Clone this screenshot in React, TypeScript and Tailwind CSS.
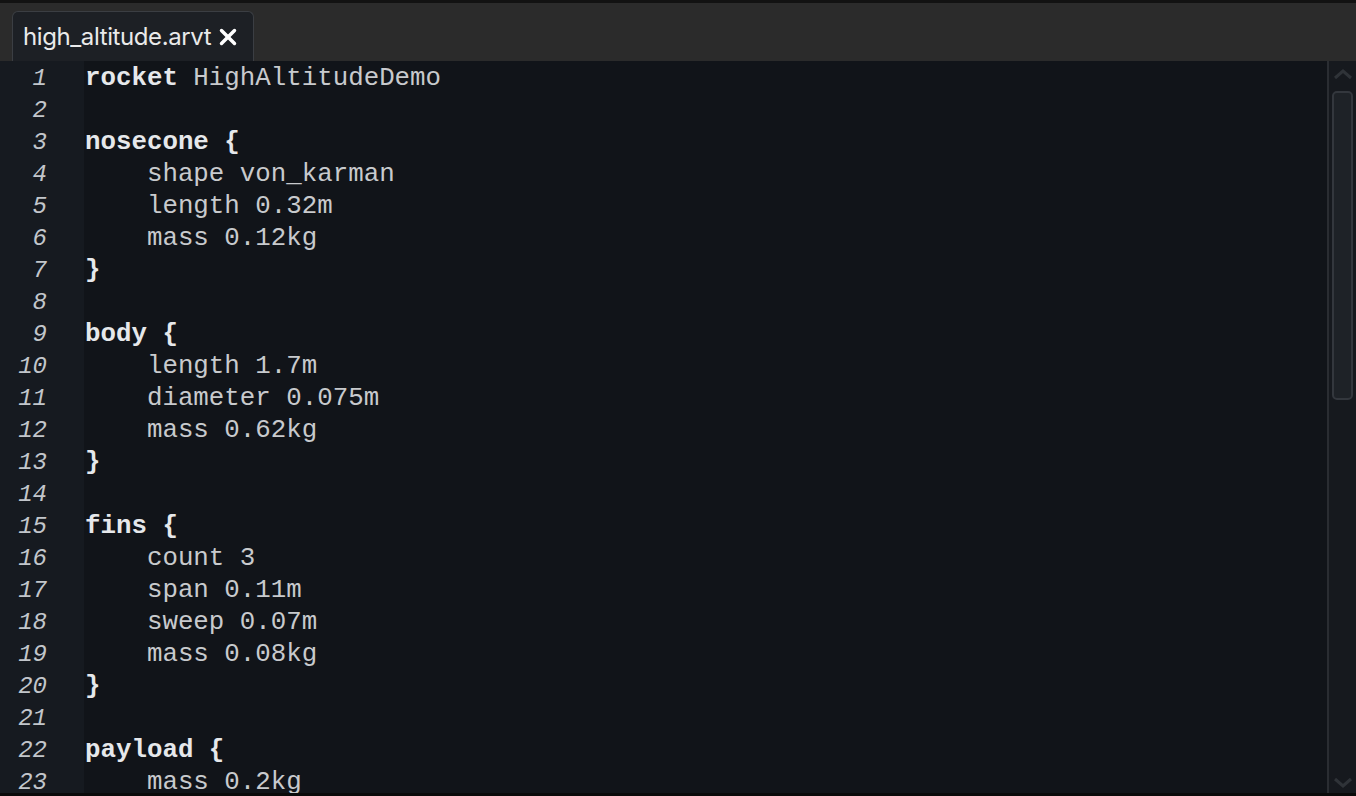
import { X } from "lucide-react";

const lines: { text: string; kw?: boolean }[] = [
  { text: "rocket HighAltitudeDemo", kw: true },
  { text: "" },
  { text: "nosecone {", kw: true },
  { text: "    shape von_karman" },
  { text: "    length 0.32m" },
  { text: "    mass 0.12kg" },
  { text: "}", kw: true },
  { text: "" },
  { text: "body {", kw: true },
  { text: "    length 1.7m" },
  { text: "    diameter 0.075m" },
  { text: "    mass 0.62kg" },
  { text: "}", kw: true },
  { text: "" },
  { text: "fins {", kw: true },
  { text: "    count 3" },
  { text: "    span 0.11m" },
  { text: "    sweep 0.07m" },
  { text: "    mass 0.08kg" },
  { text: "}", kw: true },
  { text: "" },
  { text: "payload {", kw: true },
  { text: "    mass 0.2kg" },
];

function CodeLine({ text, kw }: { text: string; kw?: boolean }) {
  if (!kw) return <span>{text}</span>;
  const i = text.indexOf(" ");
  const word = i == -1 ? text : text.slice(0, i);
  const rest = i == -1 ? "" : text.slice(i);
  return (
    <span>
      <b className="font-bold text-[#e6e8eb]">{word}</b>
      {rest.trim() == "{" ? <b className="font-bold text-[#e6e8eb]">{rest}</b> : rest}
    </span>
  );
}

export default function App() {
  return (
    <main className="w-[1356px] h-[796px] flex flex-col bg-[#2a2a2a] overflow-hidden">
      <header className="h-[61px] shrink-0 flex items-end border-t-[3px] border-[#121212] bg-[#2b2b2b] px-[12px]">
        <div className="h-[50px] w-[242px] flex items-center gap-[4px] pl-[10px] rounded-t-[6px] border border-b-0 border-[#3b3e43] bg-[#1d2025] text-[#eaeaea] text-[24px] font-['Inter','Liberation_Sans',sans-serif] tracking-[-0.4px]">
          <span>high_altitude.arvt</span>
          <X size={26} strokeWidth={3.2} className="text-white" />
        </div>
      </header>
      <section className="flex-1 flex min-h-0 border-b-[3px] border-[#0a0a0a]">
        <div className="w-[84px] shrink-0 bg-[#161a20] pt-[2px] font-['Courier_New','Liberation_Mono',monospace] italic text-[24px] text-[#c2c6cb]">
          {lines.map((_, index) => (
            <div key={index} className="h-[32px] leading-[32px] text-right pr-[37px]">
              {index + 1}
            </div>
          ))}
        </div>
        <div className="flex-1 bg-[#111419] pt-[2px] pl-[1px] font-['Courier_New','Liberation_Mono',monospace] text-[25.8px] text-[#c8cacd] whitespace-pre overflow-hidden">
          {lines.map((line, index) => (
            <div key={index} className="h-[32px] leading-[32px]">
              <CodeLine text={line.text} kw={line.kw} />
            </div>
          ))}
        </div>
        <aside className="w-[29px] shrink-0 border-l-[2px] border-[#2a2d32] bg-[#16191e] flex flex-col items-center">
          <svg width="22" height="12" viewBox="0 0 22 12" className="mt-[7px]">
            <path d="M3 10 L11 3 L19 10" stroke="#2f3338" strokeWidth="3" fill="none" />
          </svg>
          <div className="mt-[11px] w-[21px] h-[309px] rounded-[5px] border-[2px] border-[#33373d] bg-[#1e2227]" />
          <div className="flex-1" />
          <svg width="22" height="12" viewBox="0 0 22 12" className="mb-[4px]">
            <path d="M3 2 L11 9 L19 2" stroke="#2f3338" strokeWidth="3" fill="none" />
          </svg>
        </aside>
      </section>
    </main>
  );
}
